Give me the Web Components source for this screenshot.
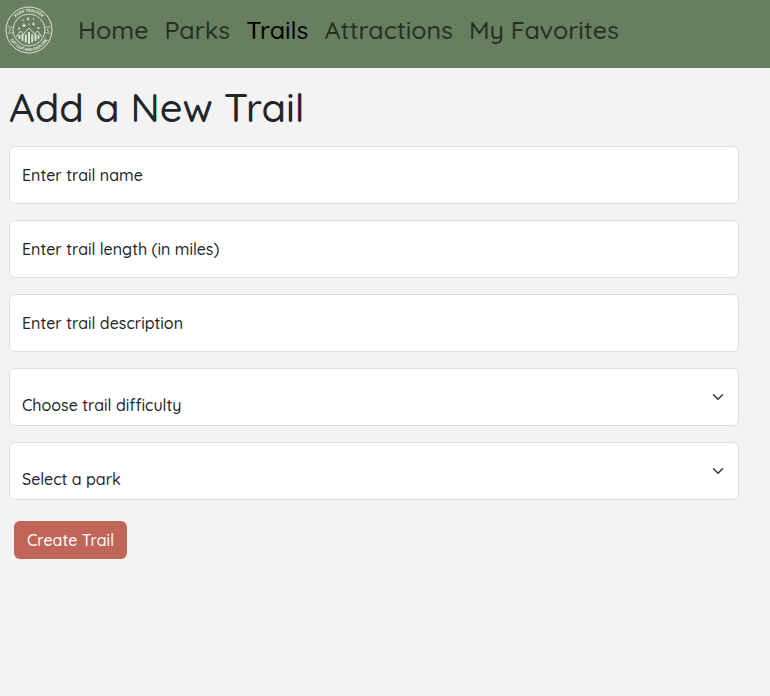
<!DOCTYPE html>
<html lang="en">
<head>
<meta charset="utf-8">
<meta name="viewport" content="width=device-width, initial-scale=1">
<title>Park Tracker – Add a New Trail</title>
<style>
  body {
    margin: 0;
    min-height: 100vh;
    background: #f3f3f3;
    color: #212529;
    font: 500 16px/24px Quicksand, Lato, sans-serif;
  }
</style>
</head>
<body>
<trail-page></trail-page>

<script>
const define = (name, html, setup) => {
  const template = document.createElement('template');
  template.innerHTML = html;
  customElements.define(name, class extends HTMLElement {
    connectedCallback() {
      if (this.shadowRoot) return;
      this.attachShadow({ mode: 'open' }).append(template.content.cloneNode(true));
      if (setup) setup(this, this.shadowRoot);
    }
  });
};

define('park-logo', `
  <style>
    :host { display: block; flex: none; width: 48px; height: 48px; }
    svg { display: block; width: 100%; height: 100%; }
    text { font: 900 4px Lato, sans-serif; fill: #e6ece2; stroke: none; }
  </style>
  <svg viewBox="0 0 48 48" role="img" aria-label="Park Tracker: get out and explore" fill="none" stroke="#dfe7db">
    <circle cx="24" cy="24" r="23" stroke-width="1"/>
    <circle cx="24" cy="24" r="16" stroke-width=".9"/>
    <path id="top" d="M5.800 24a18.200 18.200 0 0 1 36.400 0" stroke="none"/>
    <path id="bottom" d="M3 24a21 21 0 0 0 42 0" stroke="none"/>
    <text text-anchor="middle"><textPath href="#top" startOffset="50%">PARK TRACKER</textPath></text>
    <text text-anchor="middle"><textPath href="#bottom" startOffset="50%">GET OUT AND EXPLORE</textPath></text>
    <path stroke-width=".7" d="M2.500 20.500l5.500 1M2.500 27.500l5.500-1M4 22.300l2 1.700-2 1.700M45.500 20.500l-5.500 1M45.500 27.500l-5.500-1M44 22.300l-2 1.700 2 1.700"/>
    <path stroke-width="1" d="M11 31l4.500-6 3 3 5.500-6 5.500 6 3-3 4.500 6"/>
    <path stroke-width="1.900" d="M14.500 29v4M17.500 28v7M20.800 28.500v8M24 26v12M27.200 28.500v8M30.500 28v7M33.500 29v4"/>
    <path stroke-width="1.100" d="M23 11.500v3M21.500 13h3M19 17.500v4M17 19.500h4M28.500 16.500v3M27 18h3M14 21.500v2M13 22.500h2M33.500 21v2M32.500 22h2M28.500 12v1.500M18 13.500v1.500M24 17.500v1.500"/>
  </svg>`);

define('nav-item', `
  <style>
    :host { display: block; flex: none; }
    a { display: block; padding: 0 8px; font-size: 25px; line-height: 40px; color: #243022; text-decoration: none; white-space: nowrap; }
    a[aria-current] { color: #000; }
  </style>
  <a href="#"><slot></slot></a>`, (host, root) => {
    if (host.hasAttribute('active')) root.querySelector('a').setAttribute('aria-current', 'page');
  });

define('site-nav', `
  <style>
    :host { display: block; background: #677f5f; }
    nav { display: flex; align-items: flex-start; padding: 6px 5px 14px; }
    .links { display: flex; padding: 4px 0 4px 17px; }
  </style>
  <nav aria-label="Main"><park-logo></park-logo><div class="links"><slot></slot></div></nav>`);

define('text-field', `
  <style>
    :host { display: grid; }
    input, label { grid-area: 1 / 1; font: inherit; color: #212529; }
    input { box-sizing: border-box; width: 100%; min-width: 0; height: 58px; padding: 16px 12px; background: #fff; border: 1px solid #dadfe3; border-radius: 6px; }
    label { align-self: center; padding: 0 13px; pointer-events: none; }
    input:focus + label, input:not(:placeholder-shown) + label { align-self: start; font-size: 12px; }
  </style>
  <input id="field" type="text" placeholder=" "><label for="field"><slot></slot></label>`, (host, root) => {
    const type = host.getAttribute('type');
    if (type) root.querySelector('input').type = type;
  });

define('select-field', `
  <style>
    :host { display: grid; align-items: center; }
    select, svg { grid-area: 1 / 1; }
    select { box-sizing: border-box; width: 100%; min-width: 0; height: 58px; padding: 24px 36px 8px 12px; font: inherit; color: #212529; background: #fff; border: 1px solid #dadfe3; border-radius: 6px; appearance: none; }
    svg { justify-self: end; width: 12px; height: 12px; margin-right: 15px; pointer-events: none; }
  </style>
  <select></select>
  <svg viewBox="0 0 16 16" fill="none" stroke="#343a40" stroke-width="2" stroke-linecap="round" stroke-linejoin="round" aria-hidden="true"><path d="m2 5 6 6 6-6"/></svg>`, (host, root) => {
    const select = root.querySelector('select');
    select.setAttribute('aria-label', host.getAttribute('label'));
    select.add(new Option(host.getAttribute('label'), ''));
  });

define('action-button', `
  <style>
    :host { display: block; }
    button { padding: 7px 13px; font: inherit; color: #fff; background: #c16558; border: 0; border-radius: 6px; cursor: pointer; }
  </style>
  <button type="submit"><slot></slot></button>`);

define('trail-form', `
  <style>
    :host { display: block; padding: 15px 31px 16px 9px; }
    h1 { margin: 0 0 15px; font-size: 40px; font-weight: 500; line-height: 48px; }
    form { display: grid; gap: 16px; }
    action-button { padding: 5px; }
  </style>
  <h1>Add a New Trail</h1>
  <form>
    <text-field>Enter trail name</text-field>
    <text-field type="number">Enter trail length (in miles)</text-field>
    <text-field>Enter trail description</text-field>
    <select-field label="Choose trail difficulty"></select-field>
    <select-field label="Select a park"></select-field>
    <action-button>Create Trail</action-button>
  </form>`);

define('trail-page', `
  <style>:host { display: block; }</style>
  <header><site-nav>
    <nav-item>Home</nav-item>
    <nav-item>Parks</nav-item>
    <nav-item active>Trails</nav-item>
    <nav-item>Attractions</nav-item>
    <nav-item>My Favorites</nav-item>
  </site-nav></header>
  <main><trail-form></trail-form></main>`);
</script>
</body>
</html>
